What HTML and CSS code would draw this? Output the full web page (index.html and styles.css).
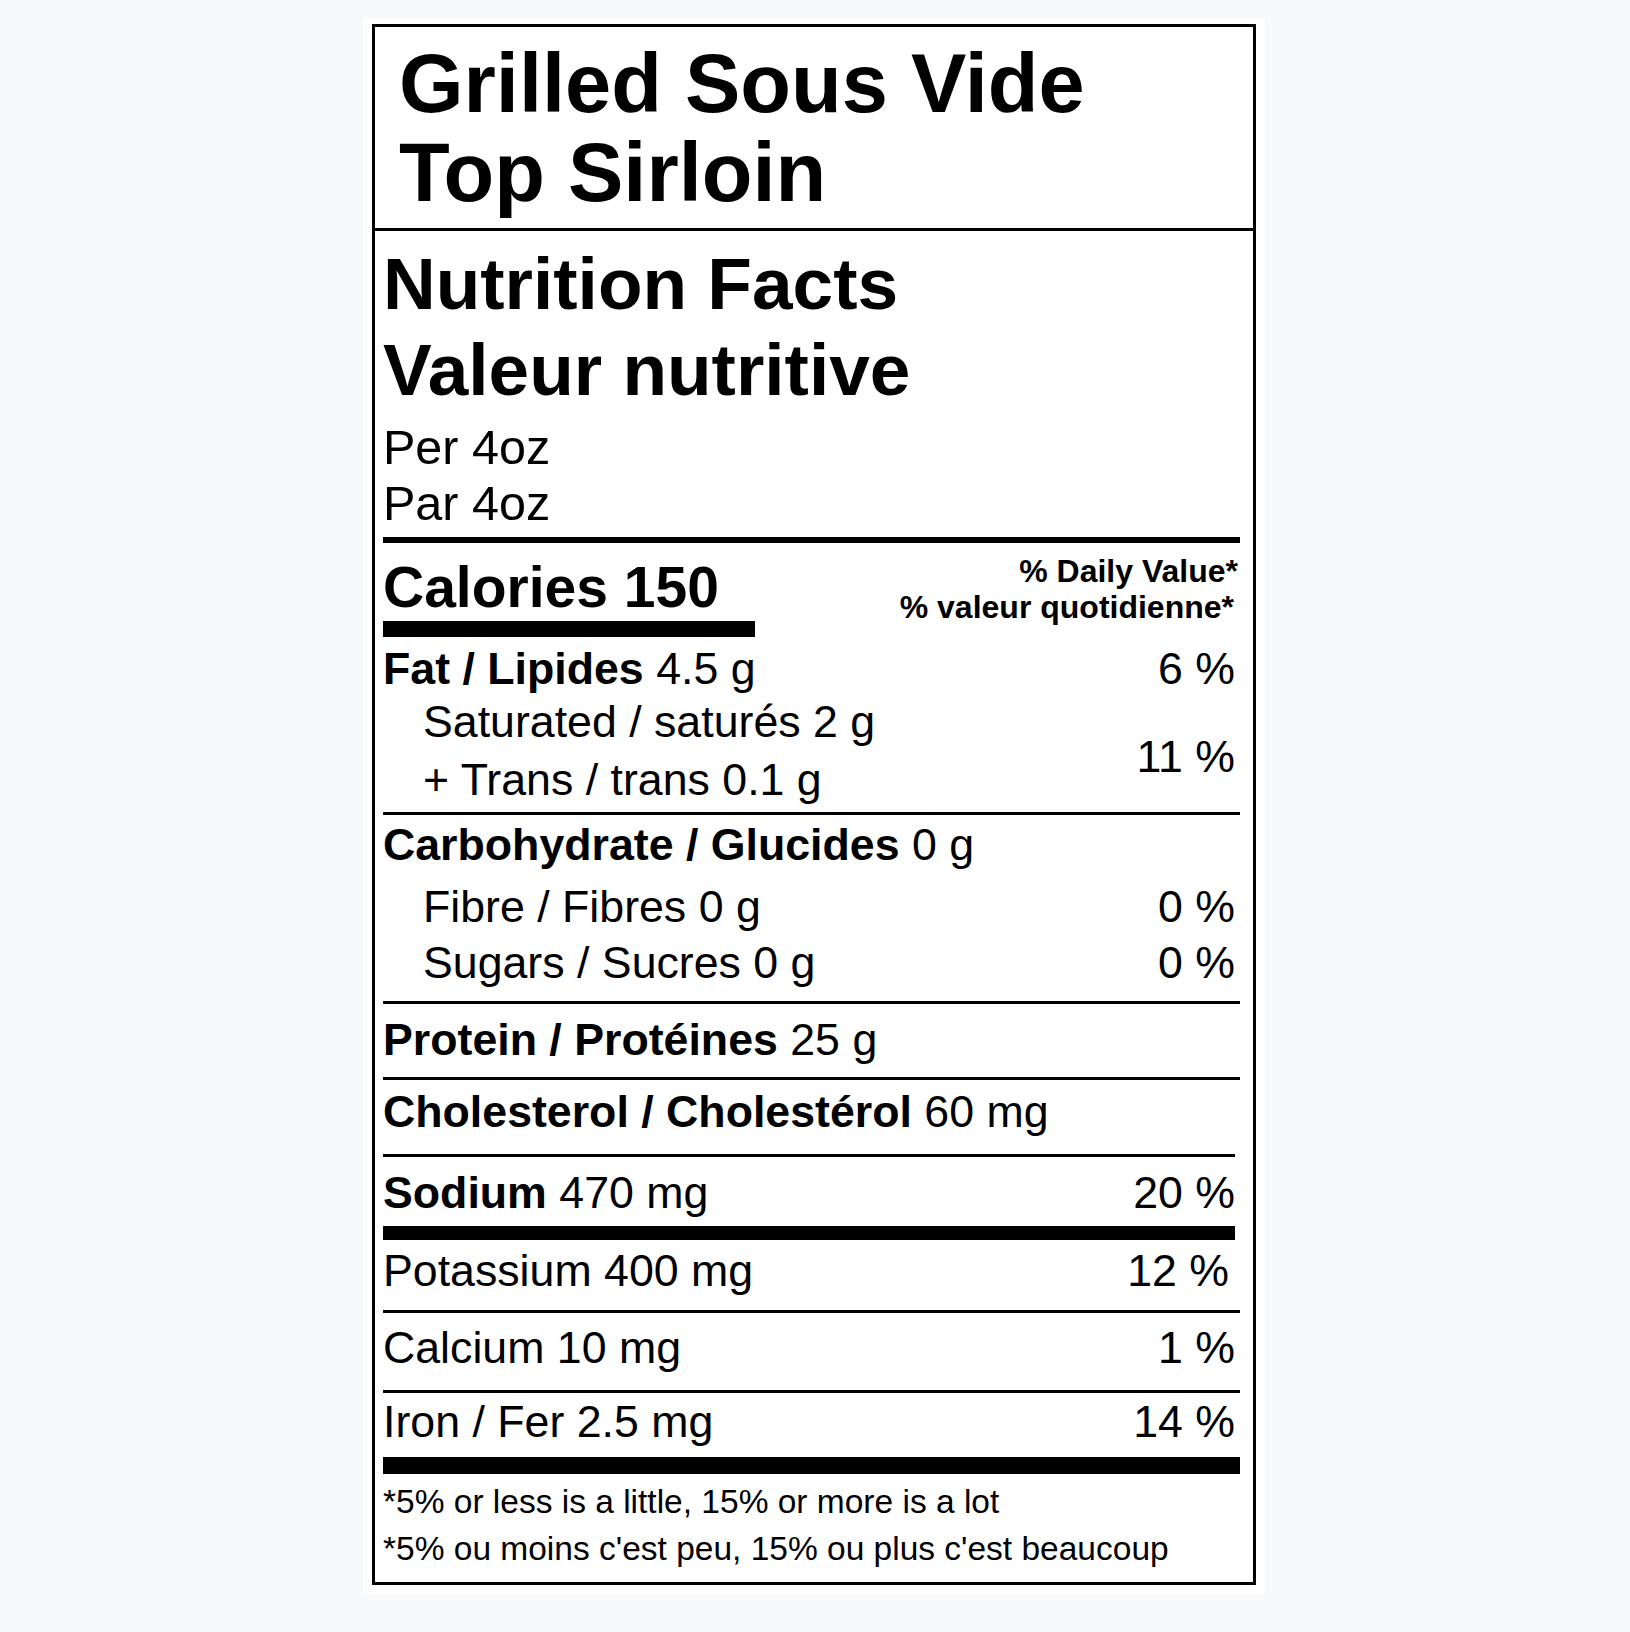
FILE: index.html
```html
<!DOCTYPE html>
<html lang="en">
<head>
<meta charset="utf-8">
<title>Grilled Sous Vide Top Sirloin</title>
<link rel="stylesheet" href="styles.css">
</head>
<body>
<div class="panel">
  <div class="label">
    <div class="title">Grilled Sous Vide<br>Top Sirloin</div>
    <div class="facts">
      <div class="nf">Nutrition Facts<br>Valeur nutritive</div>
      <div class="serving">Per 4oz<br>Par 4oz</div>
      <div class="rule rule-top"></div>
      <div class="cal-row">
        <div class="cal-left">
          <div class="cal">Calories 150</div>
          <div class="cal-bar"></div>
        </div>
        <div class="dv">
          <div>% Daily Value*</div>
          <div class="dv2">% valeur quotidienne*</div>
        </div>
      </div>
      <div class="row fat"><span><b>Fat / Lipides</b> 4.5 g</span><span class="pct">6 %</span></div>
      <div class="sat-group">
        <div class="sub-lines">
          <div>Saturated / saturés 2 g</div>
          <div>+ Trans / trans 0.1 g</div>
        </div>
        <div class="pct sat-pct">11 %</div>
      </div>
      <div class="rule rule-fat"></div>
      <div class="row carb"><span><b>Carbohydrate / Glucides</b> 0 g</span></div>
      <div class="carb-subs">
        <div class="row sub"><span>Fibre / Fibres 0 g</span><span class="pct">0 %</span></div>
        <div class="row sub"><span>Sugars / Sucres 0 g</span><span class="pct">0 %</span></div>
      </div>
      <div class="rule rule-carb"></div>
      <div class="row protein"><span><b>Protein / Protéines</b> 25 g</span></div>
      <div class="rule rule-protein"></div>
      <div class="row chol"><span><b>Cholesterol / Cholestérol</b> 60 mg</span></div>
      <div class="rule rule-chol"></div>
      <div class="row sodium"><span><b>Sodium</b> 470 mg</span><span class="pct">20 %</span></div>
      <div class="rule rule-sodium"></div>
      <div class="row potassium"><span>Potassium 400 mg</span><span class="pct pct-k">12 %</span></div>
      <div class="rule rule-k"></div>
      <div class="row calcium"><span>Calcium 10 mg</span><span class="pct">1 %</span></div>
      <div class="rule rule-ca"></div>
      <div class="row iron"><span>Iron / Fer 2.5 mg</span><span class="pct">14 %</span></div>
      <div class="rule rule-iron"></div>
      <div class="foot">*5% or less is a little, 15% or more is a lot<br>*5% ou moins c'est peu, 15% ou plus c'est beaucoup</div>
    </div>
  </div>
</div>
</body>
</html>
```

FILE: styles.css
```css
html, body {
  margin: 0;
  padding: 0;
  background: #f8f9fa;
}

body {
  font-family: "Liberation Sans", Arial, Helvetica, sans-serif;
  color: #000;
}

.panel {
  width: 884px;
  margin: 18px 0 0 363px;
  padding: 6px 9px 9px 9px;
  background: #fff;
}

.label {
  border: 3px solid #000;
}

.title {
  padding: 12px 0 11px 24px;
  font-size: 83px;
  line-height: 89px;
  font-weight: bold;
  border-bottom: 3px solid #000;
}

.facts {
  padding: 0 13px 10px 8px;
}

.nf {
  margin-top: 10px;
  font-size: 73px;
  line-height: 86px;
  font-weight: bold;
}

.serving {
  margin-top: 6px;
  font-size: 48.5px;
  line-height: 56px;
}

.rule {
  background: #000;
  height: 3px;
}

.rule-top { margin-top: 6px; height: 6px; }
.rule-fat { margin-top: 3px; }
.rule-carb { margin-top: 10px; }
.rule-protein { margin-top: 13px; }
.rule-chol { margin-top: 18px; margin-right: 5px; }
.rule-sodium { margin-top: 9px; height: 14px; margin-right: 5px; }
.rule-k { margin-top: 15px; }
.rule-ca { margin-top: 18px; }
.rule-iron { margin-top: 11px; height: 17px; }

.cal-row {
  display: flex;
  justify-content: space-between;
  align-items: flex-start;
}

.cal {
  padding-top: 16px;
  font-size: 57px;
  line-height: 56px;
  font-weight: bold;
}

.cal-bar {
  margin-top: 6px;
  width: 372px;
  height: 16px;
  background: #000;
}

.dv {
  padding-top: 10px;
  padding-right: 2px;
  font-size: 32px;
  line-height: 36px;
  font-weight: bold;
  text-align: right;
}

.dv2 {
  padding-right: 4px;
}

.row {
  display: flex;
  justify-content: space-between;
  font-size: 44.7px;
  line-height: 48px;
}

.pct {
  padding-right: 5px;
}

.pct-k {
  padding-right: 11px;
}

.fat { margin-top: 8px; }

.sat-group {
  display: flex;
  justify-content: space-between;
  font-size: 44.7px;
  line-height: 58px;
}

.sub-lines {
  padding-left: 40px;
}

.sat-pct {
  padding-top: 35px;
}

.carb { margin-top: 6px; }

.carb-subs { margin-top: 10px; }

.sub {
  line-height: 56px;
  padding-left: 40px;
}

.protein { margin-top: 12px; }
.chol { margin-top: 8px; }
.sodium { margin-top: 12px; }
.potassium { margin-top: 7px; }
.calcium { margin-top: 11px; }
.iron { margin-top: 5px; }

.foot {
  margin-top: 4px;
  font-size: 33.5px;
  line-height: 47px;
}
```
